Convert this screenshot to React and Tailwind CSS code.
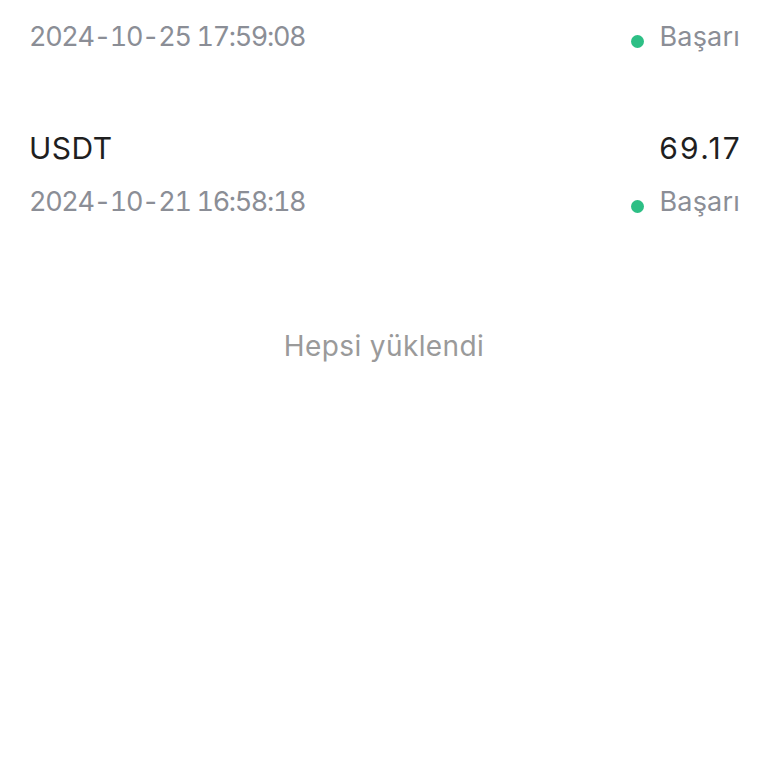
import React from "react";

function StatusRow({ date }) {
  return (
    <div className="flex items-center justify-between h-[40px]">
      <span className="text-[27px] text-[#8b8e96] tabular-nums tracking-[-1.35px]">{date}</span>
      <span className="flex items-center">
        <span className="w-[13px] h-[13px] rounded-full bg-[#2dbf85] mr-[15px] mt-[8px]"></span>
        <span className="text-[27px] text-[#8b8e96] tracking-[0.2px]">Başarı</span>
      </span>
    </div>
  );
}

export default function App() {
  return (
    <div className="w-[768px] h-[768px] bg-white overflow-hidden" style={{ fontFamily: "Inter, 'Noto Sans', sans-serif" }}>
      <div className="pl-[29px] pr-[28px] pt-[17px]">
        <StatusRow date="2024-10-25 17:59:08" />
        <div className="mt-[71px] flex items-center justify-between h-[40px]">
          <span className="text-[30px] text-[#1f1f1f] tracking-[0.5px]">USDT</span>
          <span className="text-[30px] text-[#1f1f1f] tracking-[2.2px] -mr-[2px]">69.17</span>
        </div>
        <div className="mt-[14px]">
          <StatusRow date="2024-10-21 16:58:18" />
        </div>
      </div>
      <div className="mt-[103px] text-center text-[28px] text-[#9a9a9a] tracking-[0.4px]">Hepsi yüklendi</div>
    </div>
  );
}
